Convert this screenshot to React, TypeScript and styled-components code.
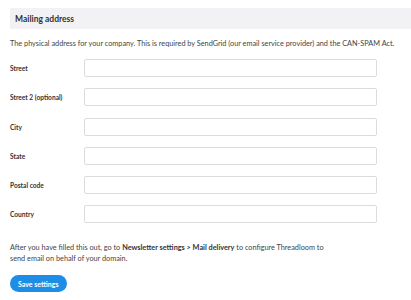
import styled, { createGlobalStyle } from "styled-components";

const fields = [
  "Street",
  "Street 2 (optional)",
  "City",
  "State",
  "Postal code",
  "Country",
];

export default function App() {
  return (
    <Page>
      <GlobalStyle />
      <SectionHeader>Mailing address</SectionHeader>
      <Description>
        The physical address for your company. This is required by SendGrid
        (our email service provider) and the CAN-SPAM Act.
      </Description>
      <Form>
        {fields.map((label) => (
          <FieldRow key={label}>
            <Label>{label}</Label>
            <TextInput type="text" />
          </FieldRow>
        ))}
      </Form>
      <Note>
        After you have filled this out, go to{" "}
        <strong>Newsletter settings &gt; Mail delivery</strong> to configure
        Threadloom to
        <br />
        send email on behalf of your domain.
      </Note>
      <SaveButton>Save settings</SaveButton>
    </Page>
  );
}

const GlobalStyle = createGlobalStyle`
  body {
    margin: 0;
    background: #ffffff;
    font-family: Lato, "Liberation Sans", sans-serif;
  }
`;

const Page = styled.div`
  padding: 8px 0 0 10px;
  width: 411px;
  box-sizing: border-box;
`;

const SectionHeader = styled.div`
  height: 21px;
  display: flex;
  align-items: center;
  padding-left: 5px;
  background-color: #f2f2f4;
  font-weight: 700;
  font-size: 8.5px;
  color: #333333;
`;

const Description = styled.p`
  margin: 10px 0 0;
  font-size: 7.3px;
  line-height: 10px;
  color: #444444;
`;

const Form = styled.div`
  margin-top: 10px;
  display: flex;
  flex-direction: column;
  gap: 11.3px;
`;

const FieldRow = styled.div`
  display: flex;
  align-items: center;
`;

const Label = styled.label`
  width: 74px;
  font-weight: 700;
  font-size: 6.6px;
  color: #333333;
`;

const TextInput = styled.input`
  width: 293px;
  height: 18px;
  box-sizing: border-box;
  border: 1px solid #dcdcdc;
  border-radius: 2px;
  padding: 0 5px;
  outline: none;
`;

const Note = styled.p`
  margin: 19px 0 0;
  font-size: 7.3px;
  line-height: 11px;
  color: #444444;

  strong {
    color: #333333;
  }
`;

const SaveButton = styled.button`
  margin-top: 11px;
  height: 17px;
  padding: 0 8px;
  border: none;
  border-radius: 9px;
  background-color: #1e8de6;
  color: #ffffff;
  font-family: Lato, "Liberation Sans", sans-serif;
  font-weight: 700;
  font-size: 7px;
  cursor: pointer;
`;
